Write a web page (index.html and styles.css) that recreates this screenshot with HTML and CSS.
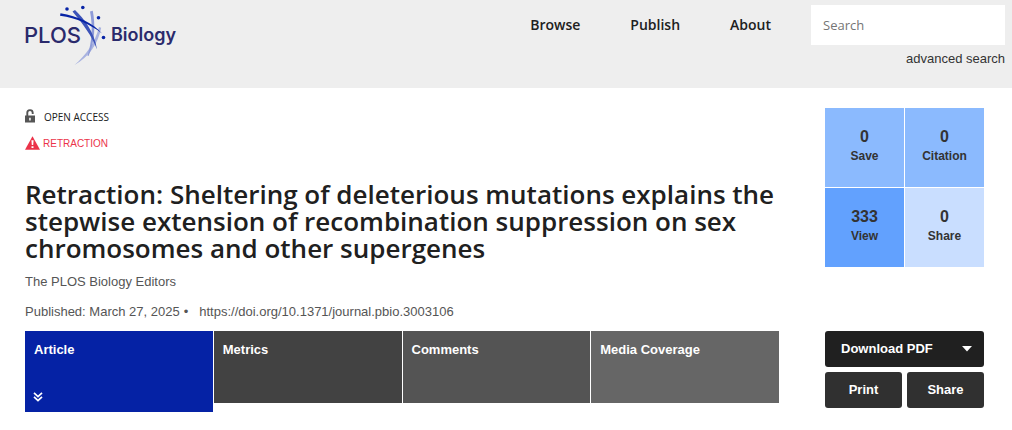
FILE: index.html
```html
<!DOCTYPE html>
<html lang="en">
<head>
<meta charset="utf-8">
<meta name="viewport" content="width=device-width, initial-scale=1">
<title>PLOS Biology</title>
<link rel="stylesheet" href="styles.css">
</head>
<body>
<header class="site-header">
  <a class="logo" href="#" aria-label="PLOS Biology">
    <svg width="152" height="62" viewBox="25 5 152 62" aria-hidden="true">
      <text class="logo-plos" x="24" y="43">PLOS</text>
      <text class="logo-biology" x="111" y="41">Biology</text>
      <path d="M99 27l2.200.8C98 44 89 57 74.500 65C86 55 95 43 99 27z" fill="#a9b3e0"/>
      <path d="M90 11.500l2.800-.8C95.500 25 95 42 88.500 56L87.500 56C92 41 93 27 90 11.500z" fill="#8e9bd8"/>
      <path d="M72.500 11.500l2.500-1.500C84 19 94 31 97 49.500C92 36 83 24 72.500 11.500z" fill="#3c53b8"/>
      <path d="M60.500 13.200C78 16 93 23 102 33.500C91 25 77 18 60 15.800z" fill="#0824a6"/>
      <circle cx="67" cy="9" r="1.800" fill="#0824a6"/>
      <circle cx="82.800" cy="7.500" r="1.800" fill="#0824a6"/>
      <circle cx="98.500" cy="17.800" r="1.800" fill="#0824a6"/>
      <circle cx="103.500" cy="37.500" r="1.800" fill="#0824a6"/>
    </svg>
  </a>
  <nav class="main-nav">
    <a href="#">Browse</a>
    <a href="#">Publish</a>
    <a href="#">About</a>
  </nav>
  <form class="search">
    <input class="search-input" type="search" placeholder="Search" aria-label="Search">
    <a class="advanced" href="#">advanced search</a>
  </form>
</header>

<main class="page">
  <section class="article">
    <p class="flag">
      <svg class="flag-icon" width="14" height="16" viewBox="0 0 14 16" aria-hidden="true">
        <path d="M2.300 7V4a2.700 2.700 0 0 1 5.400-.3V5" fill="none" stroke="#555" stroke-width="1.900"/>
        <path d="M0 6.500h10V13.500H0zM4.200 8.800v2.800h1.500V8.800z" fill="#555" fill-rule="evenodd"/>
      </svg>
      <span class="open-access">OPEN ACCESS</span>
    </p>
    <p class="flag">
      <svg class="flag-icon" width="15" height="16" viewBox="0 0 15 16" aria-hidden="true">
        <path d="M7.500.2L15 13.800H0z" fill="#eb3349"/>
        <path d="M6.400 4.200h2.200l-.4 4.800H6.800zM6.500 10.200h2v1.900h-2z" fill="#fff"/>
      </svg>
      <span class="retraction">RETRACTION</span>
    </p>
    <h1 class="title">Retraction: Sheltering of deleterious mutations explains the stepwise extension of recombination suppression on sex chromosomes and other supergenes</h1>
    <p class="authors">The PLOS Biology Editors</p>
    <ul class="dates">
      <li>Published: March 27, 2025</li>
      <li class="doi"><a href="#">https://doi.org/10.1371/journal.pbio.3003106</a></li>
    </ul>
    <nav class="tabs">
      <a class="tab tab-active" href="#">Article
        <svg width="10" height="10" viewBox="1 0 10 10" aria-hidden="true"><path d="M1 .8L5 4.600 9 .8M1 4.800L5 8.600l4-3.800" fill="none" stroke="#fff" stroke-width="1.700"/></svg>
      </a>
      <a class="tab tab-metrics" href="#">Metrics</a>
      <a class="tab tab-comments" href="#">Comments</a>
      <a class="tab tab-media" href="#">Media Coverage</a>
    </nav>
  </section>

  <aside class="side">
    <ul class="signposts">
      <li class="signpost"><strong>0</strong>Save</li>
      <li class="signpost"><strong>0</strong>Citation</li>
      <li class="signpost signpost-view"><strong>333</strong>View</li>
      <li class="signpost signpost-share"><strong>0</strong>Share</li>
    </ul>
    <div class="actions">
      <button class="btn btn-download" type="button">Download PDF
        <svg width="10" height="6" viewBox="0 0 10 6" aria-hidden="true"><path d="M0 0h10L5 5.500z" fill="#fff"/></svg>
      </button>
      <button class="btn" type="button">Print</button>
      <button class="btn" type="button">Share</button>
    </div>
  </aside>
</main>
</body>
</html>
```
FILE: styles.css
```css
* {
  box-sizing: border-box;
}

body {
  margin: 0;
  background: #fff;
  color: #202020;
  font: 13px/18px "Liberation Sans", Arial, sans-serif;
}

a {
  color: inherit;
  text-decoration: none;
}

p,
ul,
h1 {
  margin: 0;
  padding: 0;
}

ul {
  list-style: none;
}

.site-header {
  display: flex;
  align-items: flex-start;
  min-height: 88px;
  padding: 5px 7px 0 25px;
  background: #eee;
}

.logo svg,
.tab svg {
  display: block;
  overflow: visible;
}

.logo-plos,
.logo-biology {
  fill: #2a2a6c;
}

.logo-plos {
  font: 500 22px Inter, sans-serif;
}

.logo-biology {
  font: 600 18px Inter, sans-serif;
}

.main-nav {
  display: flex;
  gap: 50px;
  margin: 10px 40px 0 auto;
  font: 600 14px/20px "Open Sans", sans-serif;
}

.search {
  display: flex;
  flex-direction: column;
  align-items: flex-end;
  gap: 5px;
  width: 194px;
}

.search-input {
  width: 100%;
  height: 40px;
  padding: 0 12px;
  border: 0;
  background: #fff;
  font: 13px/20px "Open Sans", sans-serif;
}

.search-input::placeholder {
  color: #757575;
}

.advanced {
  color: #333;
}

.page {
  display: flex;
  gap: 46px;
  padding: 20px 28px 18px 25px;
}

.article {
  flex: 1;
  min-width: 0;
}

.flag {
  display: flex;
  align-items: center;
  height: 18px;
  margin-bottom: 9px;
}

.flag-icon {
  flex: none;
}

.open-access {
  margin-left: 5px;
  font: 10px/18px "Open Sans", sans-serif;
}

.retraction {
  margin-left: 3px;
  color: #eb3349;
  font-size: 10px;
}

.title {
  padding-top: 19px;
  font: 600 26px/27px "Open Sans", sans-serif;
}

.authors {
  margin-top: 11px;
  color: #555;
}

.dates {
  display: flex;
  margin-top: 12px;
  color: #555;
}

.doi::before {
  content: "•";
  margin: 0 11px 0 4px;
}

.tabs {
  display: grid;
  grid-template-columns: repeat(4, 1fr);
  align-items: start;
  gap: 1px;
  margin-top: 10px;
  color: #fff;
  font-weight: 700;
}

.tab {
  min-height: 72px;
  padding: 10px 9px;
}

.tab-active {
  display: flex;
  flex-direction: column;
  justify-content: space-between;
  min-height: 81px;
  background: #0522a5;
}

.tab-metrics {
  background: #424242;
}

.tab-comments {
  background: #545454;
}

.tab-media {
  background: #666;
}

.side {
  display: flex;
  flex-direction: column;
  justify-content: space-between;
  flex: none;
  width: 159px;
  padding-bottom: 4px;
}

.signposts {
  display: grid;
  grid-template-columns: 1fr 1fr;
  gap: 1px;
}

.signpost {
  height: 79px;
  padding-top: 19px;
  background: #8bbafe;
  color: #333;
  font-size: 12px;
  font-weight: 700;
  text-align: center;
}

.signpost strong {
  display: block;
  font-size: 16px;
  line-height: 20px;
}

.signpost-view {
  background: #62a1fe;
}

.signpost-share {
  background: #c9deff;
}

.actions {
  display: grid;
  grid-template-columns: 1fr 1fr;
  gap: 5px;
}

.btn {
  height: 36px;
  padding: 0;
  border: 0;
  border-radius: 3px;
  background: #303030;
  color: #fff;
  font: 700 13px/18px "Liberation Sans", Arial, sans-serif;
}

.btn-download {
  display: flex;
  grid-column: 1 / -1;
  align-items: center;
  justify-content: space-between;
  padding: 0 12px 0 16px;
  background: #202020;
}
```
